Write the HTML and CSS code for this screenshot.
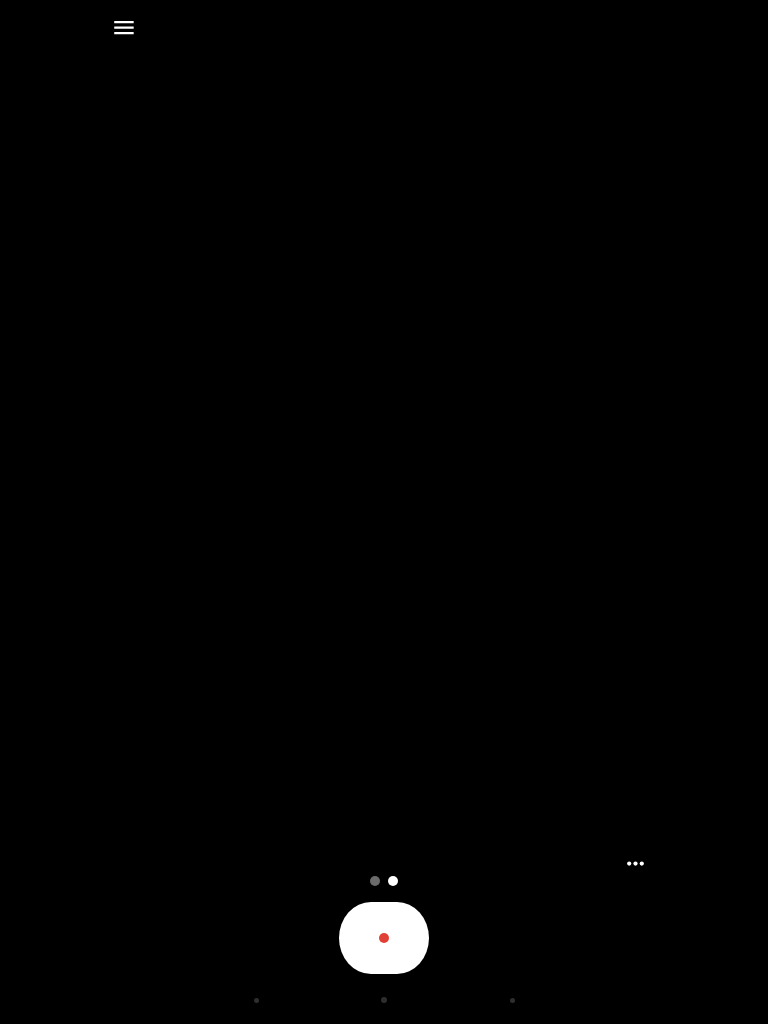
FILE: index.html
```html
<!DOCTYPE html>
<html lang="en">
<head>
<meta charset="utf-8">
<title>Recorder</title>
<link rel="stylesheet" href="styles.css">
</head>
<body>
<main class="screen">
  <header class="top-bar">
    <svg class="menu-icon" viewBox="0 0 20 14" aria-label="Menu">
      <rect x="0.2" y="0" width="19.5" height="2.3" rx="0.3"/>
      <rect x="0.2" y="5.5" width="19.5" height="2.3" rx="0.3"/>
      <rect x="0.2" y="11" width="19.5" height="2.3" rx="0.3"/>
    </svg>
  </header>
  <section class="controls">
    <div class="more-row">
      <svg class="more" viewBox="0 0 18 5" aria-label="More">
        <circle cx="2.2" cy="2.6" r="2.1"/>
        <circle cx="8.5" cy="2.6" r="2.1"/>
        <circle cx="14.8" cy="2.6" r="2.1"/>
      </svg>
    </div>
    <div class="pager">
      <span class="pager-dot"></span>
      <span class="pager-dot pager-dot-active"></span>
    </div>
    <button class="record" aria-label="Record"><span class="record-dot"></span></button>
    <nav class="nav-dots">
      <span class="nav-dot"></span>
      <span class="nav-dot nav-dot-center"></span>
      <span class="nav-dot"></span>
    </nav>
  </section>
</main>
</body>
</html>
```
FILE: styles.css
```css
* { box-sizing: border-box; }
html, body { margin: 0; height: 100%; background: #000; }
.screen {
  width: 768px;
  height: 1024px;
  background: #000;
  display: flex;
  flex-direction: column;
  justify-content: space-between;
  overflow: hidden;
}
.top-bar { padding: 21px 0 0 114px; }
.menu-icon { display: block; width: 20px; height: 14px; fill: #fff; }
.controls { display: flex; flex-direction: column; align-items: center; }
.more-row { width: 100%; display: flex; justify-content: flex-end; padding-right: 123px; }
.more { display: block; width: 18px; height: 5px; fill: #fff; }
.pager { display: flex; gap: 8px; margin-top: 10px; }
.pager-dot { width: 10px; height: 10px; border-radius: 50%; background: #6b6b6b; }
.pager-dot-active { background: #fff; }
.record {
  width: 90px;
  height: 72px;
  margin-top: 16px;
  padding: 0;
  border: 0;
  border-radius: 32px / 36px;
  background: #fff;
  display: flex;
  align-items: center;
  justify-content: center;
}
.record-dot { width: 10px; height: 10px; border-radius: 50%; background: #e04035; }
.nav-dots {
  width: 261px;
  height: 50px;
  padding-top: 2px;
  display: flex;
  align-items: center;
  justify-content: space-between;
}
.nav-dot { width: 5px; height: 5px; border-radius: 50%; background: #2e2e2e; }
.nav-dot-center { width: 6px; height: 6px; }
```
